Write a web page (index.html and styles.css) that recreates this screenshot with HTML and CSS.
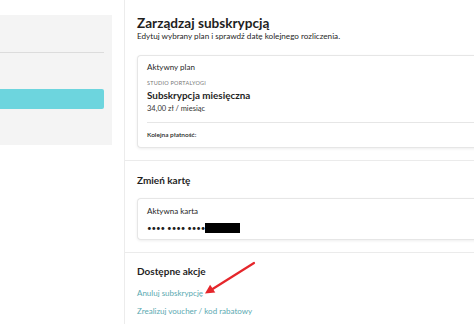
FILE: index.html
```html
<!DOCTYPE html>
<html lang="pl">
<head>
<meta charset="utf-8">
<title>Zarządzaj subskrypcją</title>
<link rel="stylesheet" href="styles.css">
</head>
<body>
<div class="layout">
  <aside class="side">
    <div class="side-panel">
      <div class="side-rule"></div>
      <div class="side-button"></div>
    </div>
  </aside>
  <main class="main">
    <section class="section first">
      <h1 class="title">Zarządzaj subskrypcją</h1>
      <p class="subtitle">Edytuj wybrany plan i sprawdź datę kolejnego rozliczenia.</p>
      <div class="card">
        <div class="card-body">
          <div class="label">Aktywny plan</div>
          <div class="brand">STUDIO PORTALYOGI</div>
          <div class="plan">Subskrypcja miesięczna</div>
          <div class="price">34,00 zł / miesiąc</div>
        </div>
        <div class="card-footer">Kolejna płatność:</div>
      </div>
    </section>
    <section class="section second">
      <h2 class="heading">Zmień kartę</h2>
      <div class="card card-small">
        <div class="label">Aktywna karta</div>
        <div class="card-number"><span class="dots">•••• •••• ••••</span><span class="masked"></span></div>
      </div>
    </section>
    <section class="section third">
      <h2 class="heading">Dostępne akcje</h2>
      <a class="action action-first" href="#">Anuluj subskrypcję</a>
      <a class="action action-second" href="#">Zrealizuj voucher / kod rabatowy</a>
    </section>
  </main>
</div>
<svg class="arrow" width="474" height="324" viewBox="0 0 474 324">
  <line x1="254" y1="263" x2="211" y2="290" stroke="#e5262b" stroke-width="2.2" stroke-linecap="round"/>
  <polygon points="205,293.5 215.3,292.6 210.1,284.7" fill="#e5262b"/>
</svg>
</body>
</html>
```
FILE: styles.css
```css
html, body {
  margin: 0;
  padding: 0;
  background: #ffffff;
}
body {
  width: 474px;
  height: 324px;
  overflow: hidden;
  position: relative;
  font-family: Lato, "Noto Sans", sans-serif;
  color: #1f1f1f;
}
.layout {
  display: flex;
  height: 324px;
}
.side {
  width: 112px;
  flex: none;
  padding-top: 15px;
}
.side-panel {
  background: #f4f4f4;
  height: 130px;
  padding-top: 37px;
  box-sizing: border-box;
}
.side-rule {
  width: 104px;
  height: 1px;
  background: #dcdcdc;
}
.side-button {
  width: 104px;
  height: 20px;
  margin-top: 36px;
  background: #6dd5de;
  border-radius: 0 2px 2px 0;
}
.main {
  flex: 1;
  margin-left: 12px;
  border-left: 1px solid #ececec;
  min-width: 0;
}
.section {
  padding-left: 12px;
  border-bottom: 1px solid #ebebeb;
}
.first {
  padding-top: 15px;
  padding-bottom: 12px;
}
.second {
  padding-top: 13px;
  padding-bottom: 12px;
}
.third {
  padding-top: 12px;
  border-bottom: none;
}
.title {
  margin: 0;
  font-size: 13.6px;
  line-height: 16px;
  font-weight: 700;
}
.subtitle {
  margin: 0;
  font-size: 8.15px;
  line-height: 10px;
}
.card {
  margin-top: 14px;
  margin-right: -12px;
  border: 1px solid #e6e6e6;
  border-right: none;
  border-radius: 4px 0 0 4px;
  box-shadow: 0 1px 3px rgba(0, 0, 0, 0.07);
  background: #fff;
}
.card-body {
  padding: 6px 9px 8px;
}
.label {
  font-size: 8px;
  line-height: 10px;
}
.brand {
  margin-top: 7px;
  font-size: 5.5px;
  line-height: 8px;
  letter-spacing: 0.25px;
  color: #777;
}
.plan {
  margin-top: 2px;
  font-size: 9.9px;
  line-height: 13px;
  font-weight: 700;
}
.price {
  margin-top: 2px;
  font-size: 7.5px;
  line-height: 10px;
  color: #333;
}
.card-footer {
  margin-left: 9px;
  border-top: 1px solid #e6e6e6;
  padding: 7px 0 8px;
  font-size: 6.5px;
  line-height: 9px;
  font-weight: 600;
}
.heading {
  margin: 0;
  font-size: 10px;
  line-height: 13px;
  font-weight: 700;
}
.card-small {
  margin-top: 11px;
  padding: 7px 9px 5px;
}
.card-number {
  margin-top: 6px;
  height: 12px;
  display: flex;
  align-items: center;
}
.dots {
  font-size: 8px;
  line-height: 12px;
  letter-spacing: -0.1px;
}
.masked {
  display: inline-block;
  width: 35px;
  height: 10px;
  background: #000;
}
.action {
  display: block;
  font-size: 8px;
  line-height: 10px;
  color: #5aa9b1;
  text-decoration: none;
}
.action-first {
  margin-top: 10px;
}
.action-second {
  margin-top: 8px;
}
.arrow {
  position: absolute;
  left: 0;
  top: 0;
  pointer-events: none;
}
```
